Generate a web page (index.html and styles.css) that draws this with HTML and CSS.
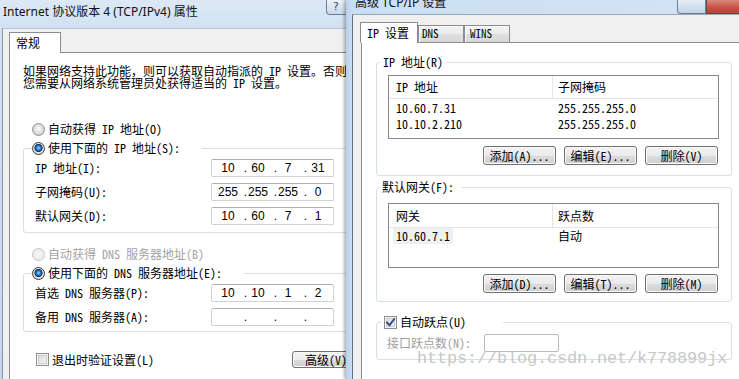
FILE: index.html
```html
<!DOCTYPE html>
<html lang="zh-CN">
<head>
<meta charset="utf-8">
<title>TCP/IP 属性</title>
<link rel="stylesheet" href="styles.css">
</head>
<body>
<div class="desk">
  <section class="win win-l">
    <header class="tbar tbar-l">
      <span class="ttl ttl-l">Internet 协议版本 4 (TCP/IPv4) 属性</span>
      <span class="capbtn help">?</span>
    </header>
    <div class="client client-l">
      <div class="tabs"><span class="tab sel tab-gen">常规</span></div>
      <div class="panel panel-l">
        <p class="intro">如果网络支持此功能，则可以获取自动指派的 IP 设置。否则<br>您需要从网络系统管理员处获得适当的 IP 设置。</p>
        <div class="opt opt-ip"><i class="rb"></i><span>自动获得 IP 地址(O)</span></div>
        <fieldset class="grp grp-l grp-ip">
          <legend class="opt leg-l"><i class="rb on"></i><span>使用下面的 IP 地址(S):</span></legend>
          <div class="frow"><span class="flab">IP 地址(I):</span><div class="ip"><span>10</span><i>.</i><span>60</span><i>.</i><span>7</span><i>.</i><span>31</span></div></div>
          <div class="frow"><span class="flab">子网掩码(U):</span><div class="ip"><span>255</span><i>.</i><span>255</span><i>.</i><span>255</span><i>.</i><span>0</span></div></div>
          <div class="frow"><span class="flab">默认网关(D):</span><div class="ip"><span>10</span><i>.</i><span>60</span><i>.</i><span>7</span><i>.</i><span>1</span></div></div>
        </fieldset>
        <div class="opt opt-dns dis"><i class="rb off"></i><span>自动获得 DNS 服务器地址(B)</span></div>
        <fieldset class="grp grp-l grp-dns">
          <legend class="opt leg-l leg-dns"><i class="rb on"></i><span>使用下面的 DNS 服务器地址(E):</span></legend>
          <div class="frow"><span class="flab">首选 DNS 服务器(P):</span><div class="ip"><span>10</span><i>.</i><span>10</span><i>.</i><span>1</span><i>.</i><span>2</span></div></div>
          <div class="frow"><span class="flab">备用 DNS 服务器(A):</span><div class="ip"><span></span><i>.</i><span></span><i>.</i><span></span><i>.</i><span></span></div></div>
        </fieldset>
        <div class="bottom">
          <div class="opt chk-row"><i class="cb"></i><span>退出时验证设置(L)</span></div>
          <button class="btn adv">高级(V)...</button>
        </div>
      </div>
    </div>
  </section>

  <section class="win win-r">
    <header class="tbar tbar-r">
      <span class="ttl ttl-r">高级 TCP/IP 设置</span>
      <span class="capbtn minb"></span>
      <span class="capbtn closeb"></span>
    </header>
    <div class="client client-r">
      <div class="tabs tabs-r">
        <span class="tab sel tab-ip">IP 设置</span>
        <span class="tab tab-dns">DNS</span>
        <span class="tab tab-wins">WINS</span>
      </div>
      <div class="panel panel-r">
        <fieldset class="grp grp-r g1">
          <legend class="leg-r l1">IP 地址(R)</legend>
          <div class="list list1">
            <div class="lrow lhead"><span class="c1">IP 地址</span><span class="c2">子网掩码</span></div>
            <div class="lbody">
              <div class="lrow"><span class="c1">10.60.7.31</span><span class="c2">255.255.255.0</span></div>
              <div class="lrow"><span class="c1">10.10.2.210</span><span class="c2">255.255.255.0</span></div>
            </div>
          </div>
          <div class="btns"><button class="btn">添加(A)...</button><button class="btn">编辑(E)...</button><button class="btn">删除(V)</button></div>
        </fieldset>
        <fieldset class="grp grp-r g2">
          <legend class="leg-r l2">默认网关(F):</legend>
          <div class="list list2">
            <div class="lrow lhead"><span class="c1">网关</span><span class="c2">跃点数</span></div>
            <div class="lbody">
              <div class="lrow"><span class="c1 c1s"><b class="hl">10.60.7.1</b></span><span class="c2">自动</span></div>
            </div>
          </div>
          <div class="btns b2"><button class="btn">添加(D)...</button><button class="btn">编辑(T)...</button><button class="btn">删除(M)</button></div>
        </fieldset>
        <fieldset class="grp grp-r g3">
          <legend class="opt leg-r l3"><i class="cb on"><svg viewBox="0 0 13 13" width="13" height="13"><path d="M3 6.5 L5.5 9.2 L10.2 3.2" fill="none" stroke="#3b4f86" stroke-width="1.9" stroke-linecap="square"/></svg></i><span>自动跃点(U)</span></legend>
          <div class="mrow"><span class="mlab">接口跃点数(N):</span><span class="tbox"></span></div>
        </fieldset>
      </div>
    </div>
  </section>

  <div class="wm">https://blog.csdn.net/k778899jx</div>
</div>
</body>
</html>
```

FILE: styles.css
```css
* { box-sizing: border-box; margin: 0; padding: 0; }
html, body { width: 739px; height: 379px; overflow: hidden; }
body {
  font-family: "Noto Sans Mono CJK SC", "Noto Sans CJK SC", "Liberation Mono", monospace;
  font-size: 12px;
  line-height: 12px;
  color: #000;
  background: #c9d9ea;
}
.desk { position: relative; width: 739px; height: 379px; overflow: hidden; }

/* windows */
.win { position: absolute; top: 0; height: 379px; }
.win-l {
  left: 0; width: 400px; z-index: 1;
  background: linear-gradient(#dce8f5, #d2e1f1 28px, #c4d7ec);
}
.win-r {
  left: 346px; width: 400px; z-index: 2;
  padding-left: 6px;
  background: linear-gradient(90deg, #b9d0e9, #cadff4 6px, #d3e3f4);
  box-shadow: -2px 0 3px rgba(0, 0, 0, .3);
}

.tbar { position: relative; display: flex; align-items: center; }
.ttl { white-space: nowrap; }
.tbar-l { height: 28px; padding-left: 3px; }
.ttl-l {
  font-family: "Noto Sans", "Noto Sans CJK SC", sans-serif;
  font-size: 12px; line-height: 14px; margin-top: -5px; color: #111;
}
.tbar-r { height: 14px; padding-left: 3px; }
.ttl-r {
  font-family: "Noto Sans", "Noto Sans CJK SC", sans-serif;
  font-size: 12px; line-height: 14px; margin-top: -9px; color: #111;
}

.capbtn { position: absolute; top: 0; height: 15px; }
.help {
  left: 326px; width: 26px;
  border: 1px solid #6d7f96; border-top: none; border-radius: 0 0 0 4px;
  background: linear-gradient(#edf3f9, #dbe6f1 50%, #c9d8ea);
  font-family: "DejaVu Sans", sans-serif; font-size: 11px; line-height: 13px;
  color: #3a4a60; padding-left: 6px;
}
.minb {
  left: 325px; width: 29px; height: 14px;
  border: 1px solid #6d7f96; border-top: none; border-radius: 0 0 0 4px;
  background: linear-gradient(#e6eef7, #d3e0ee 50%, #c2d3e7);
}
.closeb {
  left: 354px; width: 44px; height: 14px;
  border: 1px solid #6b4a48; border-top: none;
  background: linear-gradient(#d9877a, #c75a4c 50%, #b8402f);
}

/* client areas */
.client { background: #f0f0f0; }
.client-l {
  margin-left: 2px; height: 351px;
  border-left: 1px solid #8794a6; border-top: 1px solid #b8c4d2;
  padding: 3px 0 0 6px;
}
.client-r {
  height: 365px;
  border-left: 1px solid #5f6f84; border-top: 1px solid #97a6b8;
  padding: 7px 0 0 7px;
}

/* tabs */
.tabs { display: flex; align-items: flex-end; height: 20px; }
.tab {
  display: block; border: 1px solid #898c95; border-bottom: none; white-space: nowrap;
}
.tab.sel { height: 21px; margin-bottom: -1px; background: #fff; position: relative; z-index: 1; }
.tab-gen { width: 52px; padding-left: 6px; line-height: 19px; }
.tab-ip { width: 58px; padding-left: 6px; line-height: 20px; }
.tab-dns, .tab-wins {
  height: 17px; width: 46px; line-height: 15px; font-size: 11px;
  background: linear-gradient(#f4f4f4, #ebebeb 50%, #dedede 51%, #d8d8d8);
  box-shadow: inset 1px 1px 0 #fcfcfc;
}
.tab-dns { padding-left: 3px; }
.tab-wins { padding-left: 5px; }

.panel { border: 1px solid #898c95; background: #fff; }
.panel-l { width: 391px; height: 330px; padding: 12px 0 0 13px; }
.panel-r { margin-left: 1px; width: 390px; height: 340px; padding-top: 13px; }

/* left panel */
.intro { white-space: nowrap; line-height: 12px; }
.opt { display: flex; align-items: center; height: 14px; gap: 3px; white-space: nowrap; }
.opt-ip { margin-top: 33px; padding-left: 9px; }
.opt-dns { margin-top: 14px; padding-left: 9px; }
.dis { color: #a3a3a3; }

.grp { border: 1px solid #d5dfe5; border-radius: 3px; }
.grp-l { width: 360px; margin-top: 5px; padding: 1px 0 4px; }
.grp-dns { padding-bottom: 2px; }
.leg-l { margin-left: 8px; padding-right: 22px; }
.leg-dns { padding-right: 22px; }

.frow { display: flex; align-items: center; height: 24px; padding-left: 11px; }
.flab { width: 176px; white-space: nowrap; }

.ip {
  display: flex; align-items: center;
  width: 123px; height: 18px; padding-left: 6px;
  background: #fff; border: 1px solid #d0d1d5; border-top-color: #aeb0b6; border-radius: 2px;
  font-family: "Liberation Sans", Arial, sans-serif; font-size: 12px; line-height: 14px;
}
.ip span { width: 20px; text-align: center; }
.ip i { font-style: normal; width: 10px; text-align: right; padding-right: 1px; }

.bottom {
  display: grid; grid-template-columns: 269px 86px; align-items: center;
  height: 17px; margin-top: 19px;
}
.chk-row { padding-left: 13px; }

/* radio & checkbox */
.rb {
  display: block; flex: none; width: 13px; height: 13px; border-radius: 50%;
  border: 1px solid #8f9090;
  background: radial-gradient(circle at 50% 45%, #fbfbfb 0, #e6e6e6 3px, #d2d2d2 6px);
}
.rb.on {
  border-color: #3c3c3c;
  background: radial-gradient(circle at 50% 45%, #9ae0ff 0, #3a95dc 1.6px, #14549f 3px, #1d2f52 3.8px, #e8e8e8 4.4px, #d6d6d6 6px);
}
.rb.off { border-color: #c4c4c4; background: radial-gradient(circle, #f7f7f7, #ececec 6px); }
.cb {
  display: block; flex: none; width: 13px; height: 13px;
  border: 1px solid #8e8f8f; background: #f4f4f4;
  box-shadow: inset 0 0 0 1px #f4f4f4, inset 0 0 0 2px #c9ccd1;
  background-image: linear-gradient(135deg, #d7d9dd, #f7f7f7);
}
.cb svg { display: block; margin: -1px 0 0 -1px; }

/* buttons */
.btn {
  display: block; font: inherit; color: #000; white-space: nowrap;
  height: 19px; border: 1px solid #707070; border-radius: 3px;
  background: linear-gradient(#f2f2f2, #ebebeb 50%, #dddddd 51%, #cfcfcf);
  box-shadow: inset 0 0 0 1px #fbfbfb;
  line-height: 15px; text-align: center;
}
.adv { width: 86px; height: 17px; }

/* right panel */
.grp-r { width: 356px; margin-left: 14px; padding: 0; }
.leg-r { margin-left: 3px; line-height: 12px; white-space: nowrap; }
.l1 { padding: 0 3px; }
.l2 { padding: 0 8px 0 2px; }
.g2 { margin-top: 5px; }
.g3 { margin-top: 13px; padding-bottom: 7px; }
.l3 { margin-left: 4px; padding: 0 37px 0 3px; }

.list { margin-left: 11px; width: 331px; border: 1px solid #828790; background: #fff; }
.list1 { margin-top: 7px; height: 64px; }
.list2 { margin-top: 10px; height: 65px; }
.lrow { display: grid; grid-template-columns: 164px 1fr; height: 16px; line-height: 16px; white-space: nowrap; }
.lhead { height: 23px; line-height: 22px; border-bottom: 1px solid #e5e5e5; }
.list2 .lhead { height: 24px; line-height: 23px; }
.lhead .c1 { border-right: 1px solid #e5e5e5; }
.c1 { padding-left: 7px; }
.c2 { padding-left: 5px; }
.list1 .lbody { padding-top: 1px; }
.c1s { padding-left: 4px; }
.hl { font-weight: normal; background: #f0f0f0; padding: 0 3px; display: inline-block; }

.btns { display: flex; justify-content: flex-end; gap: 8px; margin-top: 7px; padding: 0 13px 10px 0; }
.btns .btn { width: 73px; }
.b2 { margin-top: 6px; padding-bottom: 8px; }

.mrow { display: flex; align-items: center; height: 18px; margin-top: 5px; padding-left: 10px; }
.mlab { width: 97px; color: #a0a0a0; white-space: nowrap; }
.tbox { display: block; width: 75px; height: 18px; border: 1px solid #b9babd; border-radius: 2px; background: #fff; }

/* watermark */
.wm {
  position: absolute; left: 417px; top: 349px; z-index: 5;
  font-family: "Liberation Mono", monospace; font-size: 17px; line-height: 20px;
  letter-spacing: -0.2px; color: rgba(150, 150, 150, .55);
  text-shadow: 0 0 1px rgba(255, 255, 255, .8);
  white-space: nowrap;
}
```
